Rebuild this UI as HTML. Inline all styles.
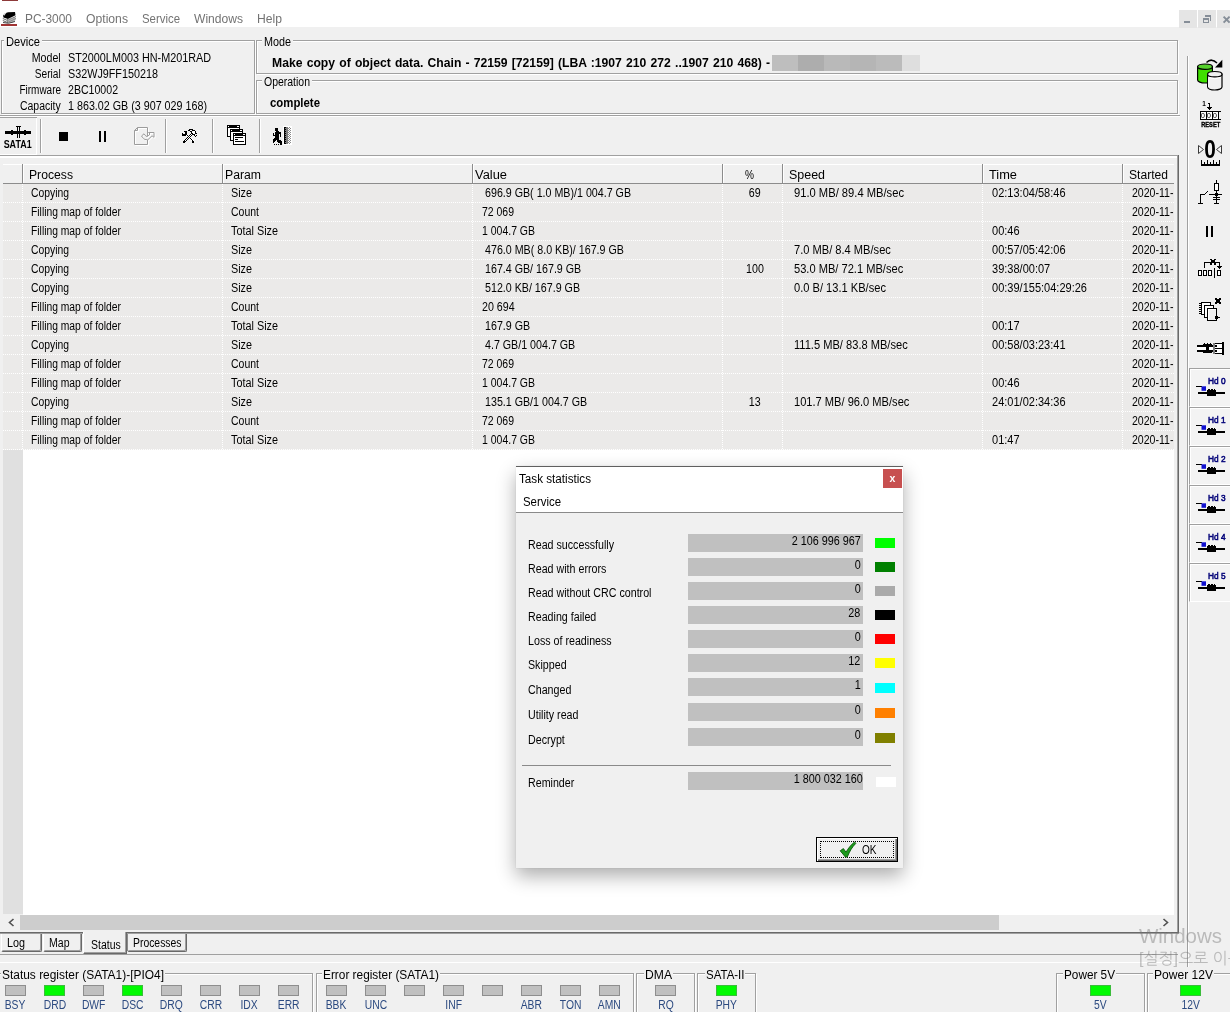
<!DOCTYPE html>
<html lang="en">
<head>
<meta charset="utf-8">
<title>PC-3000</title>
<style>
*{box-sizing:border-box;margin:0;padding:0}
html,body{width:1230px;height:1012px;overflow:hidden;background:#f0f0f0}
body{position:relative;font-family:"Liberation Sans","NanumGothic",sans-serif;font-size:12px;color:#000}
.a{position:absolute}
.t{position:absolute;white-space:pre;line-height:14px;height:14px;transform-origin:0 0}
svg{position:absolute;overflow:visible}
.grp{position:absolute;border:1px solid #a0a0a0;box-shadow:1px 1px 0 #fff,inset 1px 1px 0 #fff}
.cut{position:absolute;background:#f0f0f0;height:3px}
.led{position:absolute;width:21px;height:11px;border:1px solid #8e8e8e;background:#c0c0c0}
.led.on{background:#00fa00;border-color:#3cbc3c}
.nv{color:#1c3a70}
#root{position:absolute;left:0;top:0;width:1230px;height:1012px;will-change:transform}
</style>
</head>
<body>
<div id="root">
<div class="a" style="left:0px;top:0px;width:1230px;height:27px;background:#fff"></div>
<div class="a" style="left:2px;top:0px;width:16px;height:1px;background:#8e3a3a"></div>
<div class="a" style="left:1px;top:24px;width:16px;height:2px;background:#a03434"></div>
<svg style="left:2px;top:12px" width="15" height="12" viewBox="0 0 15 12"><path d="M1 3.500Q3 .5 6 .3L13 0l.5 3.200L6 7 1.500 5.500z" fill="#000"/><path d="M1.500 2.500Q2.500 1 4.500 .8L2 4z" fill="#ddd"/><path d="M.8 6.500l4.700 2 8.500-4M.8 8.500l4.700 2 8.500-4M5.500 7v4" stroke="#666" stroke-width="1" fill="none"/><path d="M5 7.500l4-2 5 .5-1 3-3 2-5-.5z" fill="#9a9a9a" opacity=".7"/><path d="M1 10.500q5 2 12-1" stroke="#444" stroke-width="1" fill="none"/></svg>
<span class="t" style="left:25px;top:12px;color:#737373;transform:scaleX(0.992)">PC-3000</span>
<span class="t" style="left:86px;top:12px;color:#737373;transform:scaleX(1.015)">Options</span>
<span class="t" style="left:142px;top:12px;color:#737373;transform:scaleX(0.950)">Service</span>
<span class="t" style="left:194px;top:12px;color:#737373;transform:scaleX(1.006)">Windows</span>
<span class="t" style="left:257px;top:12px;color:#737373;transform:scaleX(1.013)">Help</span>
<div class="a" style="left:1179px;top:10px;width:18px;height:18px;background:#e5e5e5"></div>
<div class="a" style="left:1198px;top:10px;width:18px;height:18px;background:#e5e5e5"></div>
<div class="a" style="left:1217px;top:10px;width:18px;height:18px;background:#e5e5e5"></div>
<div class="a" style="left:1184px;top:21px;width:6px;height:2px;background:#868e98"></div>
<svg style="left:1198px;top:10px" width="18" height="18" viewBox="0 0 18 18" shape-rendering="crispEdges"><path d="M7 5h6v6h-1V6.500H7z" fill="#868e98"/><path d="M5 8h6v5H5z M6 10v2h4v-2z" fill="#868e98" fill-rule="evenodd"/></svg>
<svg style="left:1217px;top:10px" width="13" height="18" viewBox="0 0 13 18"><path d="M6.600 6.600l6 6M12.600 6.600l-6 6" stroke="#868e98" stroke-width="2" fill="none"/></svg>
<div class="grp" style="left:1px;top:40px;width:254px;height:74px"></div><div class="cut" style="left:4px;top:40px;width:38px"></div><span class="t" style="left:6px;top:35px;transform:scaleX(0.927)">Device</span>
<div class="grp" style="left:256px;top:40px;width:922px;height:34px"></div><div class="cut" style="left:262px;top:40px;width:31px"></div><span class="t" style="left:264px;top:35px;transform:scaleX(0.899)">Mode</span>
<div class="grp" style="left:256px;top:80px;width:922px;height:34px"></div><div class="cut" style="left:262px;top:80px;width:50px"></div><span class="t" style="left:264px;top:75px;transform:scaleX(0.873)">Operation</span>
<span class="t" style="left:28.31px;top:51px;transform:scaleX(0.887);transform-origin:100% 0">Model</span>
<span class="t" style="left:68px;top:51px;transform:scaleX(0.901)">ST2000LM003 HN-M201RAD</span>
<span class="t" style="left:30.31px;top:67px;transform:scaleX(0.847);transform-origin:100% 0">Serial</span>
<span class="t" style="left:68px;top:67px;transform:scaleX(0.899)">S32WJ9FF150218</span>
<span class="t" style="left:11.00px;top:83px;transform:scaleX(0.830);transform-origin:100% 0">Firmware</span>
<span class="t" style="left:68px;top:83px;transform:scaleX(0.882)">2BC10002</span>
<span class="t" style="left:14.31px;top:99px;transform:scaleX(0.872);transform-origin:100% 0">Capacity</span>
<span class="t" style="left:68px;top:99px;transform:scaleX(0.894)">1 863.02 GB (3 907 029 168)</span>
<span class="t" style="left:272px;top:56px;font-weight:bold;transform:scaleX(1.014);word-spacing:0.8px">Make copy of object data. Chain - 72159 [72159] (LBA :1907 210 272 ..1907 210 468) -</span>
<span class="t" style="left:270px;top:96px;font-weight:bold;transform:scaleX(0.949)">complete</span>
<div class="a" style="left:772px;top:55px;width:26px;height:16px;background:#bebebe"></div>
<div class="a" style="left:798px;top:55px;width:26px;height:16px;background:#adadad"></div>
<div class="a" style="left:824px;top:55px;width:26px;height:16px;background:#b9b9b9"></div>
<div class="a" style="left:850px;top:55px;width:26px;height:16px;background:#b5b5b5"></div>
<div class="a" style="left:876px;top:55px;width:26px;height:16px;background:#bbbbbb"></div>
<div class="a" style="left:902px;top:55px;width:18px;height:16px;background:#dedede"></div>
<div class="a" style="left:0px;top:117px;width:37px;height:1px;background:#a0a0a0"></div>
<div class="a" style="left:36px;top:118px;width:1px;height:37px;background:#fff"></div>
<div class="a" style="left:0px;top:154px;width:37px;height:1px;background:#fff"></div>
<svg style="left:0px;top:117px" width="37" height="37" viewBox="0 0 37 37" shape-rendering="crispEdges"><rect x="5" y="14" width="26" height="3"/><rect x="11" y="13" width="2" height="5"/><rect x="24" y="13" width="2" height="5"/><rect x="16" y="9" width="5" height="1"/><rect x="17" y="9" width="1" height="12"/><rect x="19" y="9" width="1" height="12"/></svg>
<span class="t" style="left:2.34px;top:139px;font-size:10px;line-height:12px;height:12px;font-weight:bold;transform:scaleX(0.894);transform-origin:50% 0">SATA1</span>
<div class="a" style="left:40px;top:119px;width:1px;height:34px;background:#a0a0a0"></div>
<div class="a" style="left:41px;top:119px;width:1px;height:34px;background:#fff"></div>
<div class="a" style="left:165px;top:119px;width:1px;height:34px;background:#a0a0a0"></div>
<div class="a" style="left:166px;top:119px;width:1px;height:34px;background:#fff"></div>
<div class="a" style="left:212px;top:119px;width:1px;height:34px;background:#a0a0a0"></div>
<div class="a" style="left:213px;top:119px;width:1px;height:34px;background:#fff"></div>
<div class="a" style="left:259px;top:119px;width:1px;height:34px;background:#a0a0a0"></div>
<div class="a" style="left:260px;top:119px;width:1px;height:34px;background:#fff"></div>
<div class="a" style="left:59px;top:132px;width:9px;height:9px;background:#000"></div>
<div class="a" style="left:99px;top:131px;width:2px;height:11px;background:#000"></div>
<div class="a" style="left:104px;top:131px;width:2px;height:11px;background:#000"></div>
<svg style="left:128px;top:122px" width="32" height="28" viewBox="0 0 32 28"><g fill="none" stroke="#fff" transform="translate(1,1)"><path d="M9.500 5.500H19.500V14M19.500 18V22.500H6.500V8.500L9.500 5.500V8.500H6.500"/><path d="M13.500 14l2.500-2.200 2 2.500h1.800l2.200-2.300-1.500-1.500h5.500v4.800l-2-1.500-4.200 4-2.800-.3-1.500-1z"/></g><g fill="none" stroke="#9c9c9c"><path d="M9.500 5.500H19.500V14M19.500 18V22.500H6.500V8.500L9.500 5.500V8.500H6.500"/><path d="M13.500 14l2.500-2.200 2 2.500h1.800l2.200-2.300-1.500-1.500h5.500v4.800l-2-1.500-4.200 4-2.800-.3-1.500-1z"/></g></svg>
<svg style="left:176px;top:124px" width="28" height="24" viewBox="0 0 28 24" shape-rendering="crispEdges"><path d="M7 8h1v1h-1zM17 7h2v1h-2zM16 8h3v1h-3zM17 9h2v1h-2zM9 10h1v1h-1zM11 10h1v1h-1zM15 10h1v1h-1zM10 11h1v1h-1zM12 11h1v1h-1zM14 11h1v1h-1zM11 12h1v1h-1zM13 12h1v1h-1zM12 13h1v1h-1zM14 13h1v1h-1zM11 14h1v1h-1zM13 14h1v1h-1zM15 14h1v1h-1zM10 15h1v1h-1zM14 15h1v1h-1zM16 15h1v1h-1zM9 16h1v1h-1zM15 16h1v1h-1zM17 16h1v1h-1zM8 17h1v1h-1zM16 17h1v1h-1zM18 17h1v1h-1z" fill="#fff"/><path d="M8 7h3v1h-3zM9 8h2v1h-2zM6 9h1v1h-1zM9 9h2v1h-2zM6 10h5v1h-5zM6 11h4v1h-4zM13 5h4v1h-4zM12 6h2v1h-2zM16 6h3v1h-3zM14 7h2v1h-2zM19 7h1v1h-1zM15 8h1v1h-1zM19 8h1v1h-1zM15 9h2v1h-2zM19 9h2v1h-2zM16 10h3v1h-3zM18 11h1v1h-1zM20 11h1v1h-1zM19 12h1v1h-1zM7 17h2v1h-2zM7 18h2v1h-2zM16 17h2v1h-2zM16 18h2v1h-2zM10 10h1v1h-1zM14 10h1v1h-1zM16 10h1v1h-1zM11 11h1v1h-1zM13 11h1v1h-1zM15 11h1v1h-1zM12 12h1v1h-1zM14 12h1v1h-1zM11 13h1v1h-1zM13 13h1v1h-1zM10 14h1v1h-1zM12 14h1v1h-1zM14 14h1v1h-1zM9 15h1v1h-1zM11 15h1v1h-1zM15 15h1v1h-1zM8 16h1v1h-1zM10 16h1v1h-1zM16 16h1v1h-1zM7 17h1v1h-1zM9 17h1v1h-1zM17 17h1v1h-1z"/></svg>
<svg style="left:227px;top:125px" width="20" height="21" viewBox="0 0 20 21" shape-rendering="crispEdges"><rect x="0" y="0" width="13" height="12"/><rect x="1" y="3" width="11" height="8" fill="#fff"/><rect x="1" y="1" width="1" height="1" fill="#fff"/><rect x="10" y="1" width="2" height="1" fill="#fff"/><rect x="3" y="4" width="13" height="12"/><rect x="4" y="7" width="11" height="8" fill="#fff"/><rect x="4" y="5" width="1" height="1" fill="#fff"/><rect x="13" y="5" width="2" height="1" fill="#fff"/><rect x="6" y="8" width="13" height="12"/><rect x="7" y="11" width="11" height="8" fill="#fff"/><rect x="7" y="9" width="1" height="1" fill="#fff"/><rect x="16" y="9" width="2" height="1" fill="#fff"/><rect x="8" y="12" width="8" height="1"/><rect x="8" y="14" width="3" height="1"/><rect x="8" y="16" width="9" height="1"/></svg>
<svg style="left:268px;top:124px" width="28" height="24" viewBox="0 0 28 24" shape-rendering="crispEdges"><rect x="15" y="2" width="9" height="19" fill="#fff"/><rect x="16" y="3" width="1" height="17"/><rect x="17" y="3" width="3" height="17" fill="#7e7e7e"/><path d="M17 3h1v1h-1zM17 5h1v1h-1zM17 7h1v1h-1zM17 9h1v1h-1zM17 11h1v1h-1zM17 13h1v1h-1zM17 15h1v1h-1zM17 17h1v1h-1zM17 19h1v1h-1z"/><path d="M21 3h1v1h-1zM20 4h1v1h-1zM22 4h1v1h-1zM21 5h1v1h-1zM20 6h1v1h-1zM22 6h1v1h-1zM21 7h1v1h-1zM20 8h1v1h-1zM22 8h1v1h-1zM21 9h1v1h-1zM20 10h1v1h-1zM22 10h1v1h-1zM21 11h1v1h-1zM20 12h1v1h-1zM22 12h1v1h-1zM21 13h1v1h-1zM20 14h1v1h-1zM22 14h1v1h-1zM21 15h1v1h-1zM20 16h1v1h-1zM22 16h1v1h-1zM21 17h1v1h-1zM20 18h1v1h-1zM22 18h1v1h-1zM21 19h1v1h-1z" fill="#8a8a8a"/><path d="M7 4h3v1h-3zM7 5h3v1h-3zM7 6h3v1h-3zM8 7h3v1h-3zM7 8h6v1h-6zM5 9h1v1h-1zM7 9h6v1h-6zM5 10h1v1h-1zM7 10h4v1h-4zM12 10h1v1h-1zM5 11h6v1h-6zM12 11h1v1h-1zM7 12h4v1h-4zM12 12h1v1h-1zM7 13h4v1h-4zM6 14h5v1h-5zM5 15h6v1h-6zM5 16h3v1h-3zM9 16h4v1h-4zM5 17h2v1h-2zM9 17h5v1h-5zM5 18h1v1h-1zM10 18h4v1h-4zM12 19h2v1h-2zM6 20h1v1h-1zM8 20h1v1h-1zM10 20h1v1h-1zM12 20h2v1h-2z"/></svg>
<div class="a" style="left:0px;top:115px;width:1180px;height:1px;background:#a0a0a0"></div>
<div class="a" style="left:0px;top:116px;width:1180px;height:1px;background:#fff"></div>
<div class="a" style="left:0px;top:155px;width:1178px;height:1px;background:#a0a0a0"></div>
<div class="a" style="left:0px;top:156px;width:1177px;height:2px;background:#fff"></div>
<div class="a" style="left:1177px;top:156px;width:1px;height:777px;background:#a0a0a0"></div>
<div class="a" style="left:1178px;top:155px;width:1px;height:779px;background:#696969"></div>
<div class="a" style="left:0px;top:932px;width:1179px;height:1px;background:#696969"></div>
<div class="a" style="left:0px;top:933px;width:1179px;height:1px;background:#a0a0a0"></div>
<div class="a" style="left:3px;top:164px;width:1171px;height:20px;background:#f0f0f0"></div>
<div class="a" style="left:3px;top:164px;width:1171px;height:1px;background:#fff"></div>
<div class="a" style="left:3px;top:183px;width:1171px;height:1px;background:#8c8c8c"></div>
<div class="a" style="left:23px;top:184px;width:1151px;height:731px;background:#fff"></div>
<div class="a" style="left:3px;top:184px;width:1171px;height:266px;background:#ebeae9"></div>
<div class="a" style="left:3px;top:450px;width:20px;height:464px;background:#e0e0e0"></div>
<div class="a" style="left:22px;top:164px;width:1px;height:19px;background:#8c8c8c"></div>
<div class="a" style="left:23px;top:165px;width:1px;height:18px;background:#fff"></div>
<div class="a" style="left:222px;top:164px;width:1px;height:19px;background:#8c8c8c"></div>
<div class="a" style="left:223px;top:165px;width:1px;height:18px;background:#fff"></div>
<div class="a" style="left:472px;top:164px;width:1px;height:19px;background:#8c8c8c"></div>
<div class="a" style="left:473px;top:165px;width:1px;height:18px;background:#fff"></div>
<div class="a" style="left:722px;top:164px;width:1px;height:19px;background:#8c8c8c"></div>
<div class="a" style="left:723px;top:165px;width:1px;height:18px;background:#fff"></div>
<div class="a" style="left:782px;top:164px;width:1px;height:19px;background:#8c8c8c"></div>
<div class="a" style="left:783px;top:165px;width:1px;height:18px;background:#fff"></div>
<div class="a" style="left:982px;top:164px;width:1px;height:19px;background:#8c8c8c"></div>
<div class="a" style="left:983px;top:165px;width:1px;height:18px;background:#fff"></div>
<div class="a" style="left:1122px;top:164px;width:1px;height:19px;background:#8c8c8c"></div>
<div class="a" style="left:1123px;top:165px;width:1px;height:18px;background:#fff"></div>
<div class="a" style="left:3px;top:202px;width:1171px;height:1px;background:repeating-linear-gradient(90deg,#fff 0 1px,transparent 1px 2px)"></div>
<div class="a" style="left:3px;top:221px;width:1171px;height:1px;background:repeating-linear-gradient(90deg,#fff 0 1px,transparent 1px 2px)"></div>
<div class="a" style="left:3px;top:240px;width:1171px;height:1px;background:repeating-linear-gradient(90deg,#fff 0 1px,transparent 1px 2px)"></div>
<div class="a" style="left:3px;top:259px;width:1171px;height:1px;background:repeating-linear-gradient(90deg,#fff 0 1px,transparent 1px 2px)"></div>
<div class="a" style="left:3px;top:278px;width:1171px;height:1px;background:repeating-linear-gradient(90deg,#fff 0 1px,transparent 1px 2px)"></div>
<div class="a" style="left:3px;top:297px;width:1171px;height:1px;background:repeating-linear-gradient(90deg,#fff 0 1px,transparent 1px 2px)"></div>
<div class="a" style="left:3px;top:316px;width:1171px;height:1px;background:repeating-linear-gradient(90deg,#fff 0 1px,transparent 1px 2px)"></div>
<div class="a" style="left:3px;top:335px;width:1171px;height:1px;background:repeating-linear-gradient(90deg,#fff 0 1px,transparent 1px 2px)"></div>
<div class="a" style="left:3px;top:354px;width:1171px;height:1px;background:repeating-linear-gradient(90deg,#fff 0 1px,transparent 1px 2px)"></div>
<div class="a" style="left:3px;top:373px;width:1171px;height:1px;background:repeating-linear-gradient(90deg,#fff 0 1px,transparent 1px 2px)"></div>
<div class="a" style="left:3px;top:392px;width:1171px;height:1px;background:repeating-linear-gradient(90deg,#fff 0 1px,transparent 1px 2px)"></div>
<div class="a" style="left:3px;top:411px;width:1171px;height:1px;background:repeating-linear-gradient(90deg,#fff 0 1px,transparent 1px 2px)"></div>
<div class="a" style="left:3px;top:430px;width:1171px;height:1px;background:repeating-linear-gradient(90deg,#fff 0 1px,transparent 1px 2px)"></div>
<div class="a" style="left:3px;top:449px;width:1171px;height:1px;background:repeating-linear-gradient(90deg,#fff 0 1px,transparent 1px 2px)"></div>
<div class="a" style="left:22px;top:184px;width:1px;height:266px;background:repeating-linear-gradient(180deg,#fff 0 1px,transparent 1px 2px)"></div>
<div class="a" style="left:222px;top:184px;width:1px;height:266px;background:repeating-linear-gradient(180deg,#fff 0 1px,transparent 1px 2px)"></div>
<div class="a" style="left:472px;top:184px;width:1px;height:266px;background:repeating-linear-gradient(180deg,#fff 0 1px,transparent 1px 2px)"></div>
<div class="a" style="left:722px;top:184px;width:1px;height:266px;background:repeating-linear-gradient(180deg,#fff 0 1px,transparent 1px 2px)"></div>
<div class="a" style="left:782px;top:184px;width:1px;height:266px;background:repeating-linear-gradient(180deg,#fff 0 1px,transparent 1px 2px)"></div>
<div class="a" style="left:982px;top:184px;width:1px;height:266px;background:repeating-linear-gradient(180deg,#fff 0 1px,transparent 1px 2px)"></div>
<div class="a" style="left:1122px;top:184px;width:1px;height:266px;background:repeating-linear-gradient(180deg,#fff 0 1px,transparent 1px 2px)"></div>
<span class="t" style="left:29px;top:168px;transform:scaleX(1.015)">Process</span>
<span class="t" style="left:225px;top:168px;transform:scaleX(1.019)">Param</span>
<span class="t" style="left:475px;top:168px;transform:scaleX(1.073)">Value</span>
<span class="t" style="left:745px;top:168px;transform:scaleX(0.843)">%</span>
<span class="t" style="left:789px;top:168px;transform:scaleX(1.037)">Speed</span>
<span class="t" style="left:989px;top:168px;transform:scaleX(1.067)">Time</span>
<span class="t" style="left:1129px;top:168px;transform:scaleX(1.008)">Started</span>
<span class="t" style="left:31px;top:186px;transform:scaleX(0.863)">Copying</span>
<span class="t" style="left:231px;top:186px;transform:scaleX(0.900)">Size</span>
<span class="t" style="left:484.5px;top:186px;transform:scaleX(0.890)">696.9 GB( 1.0 MB)/1 004.7 GB</span>
<span class="t" style="left:748.32px;top:186px;transform:scaleX(0.890);transform-origin:50% 0">69</span>
<span class="t" style="left:794px;top:186px;transform:scaleX(0.932)">91.0 MB/ 89.4 MB/sec</span>
<span class="t" style="left:991.5px;top:186px;transform:scaleX(0.918)">02:13:04/58:46</span>
<span class="t" style="left:1131.5px;top:186px;transform:scaleX(0.880)">2020-11-</span>
<span class="t" style="left:31px;top:205px;transform:scaleX(0.859)">Filling map of folder</span>
<span class="t" style="left:231px;top:205px;transform:scaleX(0.874)">Count</span>
<span class="t" style="left:481.5px;top:205px;transform:scaleX(0.872)">72 069</span>
<span class="t" style="left:1131.5px;top:205px;transform:scaleX(0.880)">2020-11-</span>
<span class="t" style="left:31px;top:224px;transform:scaleX(0.859)">Filling map of folder</span>
<span class="t" style="left:231px;top:224px;transform:scaleX(0.903)">Total Size</span>
<span class="t" style="left:481.5px;top:224px;transform:scaleX(0.873)">1 004.7 GB</span>
<span class="t" style="left:991.5px;top:224px;transform:scaleX(0.918)">00:46</span>
<span class="t" style="left:1131.5px;top:224px;transform:scaleX(0.880)">2020-11-</span>
<span class="t" style="left:31px;top:243px;transform:scaleX(0.863)">Copying</span>
<span class="t" style="left:231px;top:243px;transform:scaleX(0.900)">Size</span>
<span class="t" style="left:484.5px;top:243px;transform:scaleX(0.890)">476.0 MB( 8.0 KB)/ 167.9 GB</span>
<span class="t" style="left:794px;top:243px;transform:scaleX(0.925)">7.0 MB/ 8.4 MB/sec</span>
<span class="t" style="left:991.5px;top:243px;transform:scaleX(0.918)">00:57/05:42:06</span>
<span class="t" style="left:1131.5px;top:243px;transform:scaleX(0.880)">2020-11-</span>
<span class="t" style="left:31px;top:262px;transform:scaleX(0.863)">Copying</span>
<span class="t" style="left:231px;top:262px;transform:scaleX(0.900)">Size</span>
<span class="t" style="left:484.5px;top:262px;transform:scaleX(0.890)">167.4 GB/ 167.9 GB</span>
<span class="t" style="left:744.98px;top:262px;transform:scaleX(0.890);transform-origin:50% 0">100</span>
<span class="t" style="left:794px;top:262px;transform:scaleX(0.925)">53.0 MB/ 72.1 MB/sec</span>
<span class="t" style="left:991.5px;top:262px;transform:scaleX(0.918)">39:38/00:07</span>
<span class="t" style="left:1131.5px;top:262px;transform:scaleX(0.880)">2020-11-</span>
<span class="t" style="left:31px;top:281px;transform:scaleX(0.863)">Copying</span>
<span class="t" style="left:231px;top:281px;transform:scaleX(0.900)">Size</span>
<span class="t" style="left:484.5px;top:281px;transform:scaleX(0.890)">512.0 KB/ 167.9 GB</span>
<span class="t" style="left:794px;top:281px;transform:scaleX(0.925)">0.0 B/ 13.1 KB/sec</span>
<span class="t" style="left:991.5px;top:281px;transform:scaleX(0.918)">00:39/155:04:29:26</span>
<span class="t" style="left:1131.5px;top:281px;transform:scaleX(0.880)">2020-11-</span>
<span class="t" style="left:31px;top:300px;transform:scaleX(0.859)">Filling map of folder</span>
<span class="t" style="left:231px;top:300px;transform:scaleX(0.874)">Count</span>
<span class="t" style="left:481.5px;top:300px;transform:scaleX(0.890)">20 694</span>
<span class="t" style="left:1131.5px;top:300px;transform:scaleX(0.880)">2020-11-</span>
<span class="t" style="left:31px;top:319px;transform:scaleX(0.859)">Filling map of folder</span>
<span class="t" style="left:231px;top:319px;transform:scaleX(0.903)">Total Size</span>
<span class="t" style="left:484.5px;top:319px;transform:scaleX(0.890)">167.9 GB</span>
<span class="t" style="left:991.5px;top:319px;transform:scaleX(0.918)">00:17</span>
<span class="t" style="left:1131.5px;top:319px;transform:scaleX(0.880)">2020-11-</span>
<span class="t" style="left:31px;top:338px;transform:scaleX(0.863)">Copying</span>
<span class="t" style="left:231px;top:338px;transform:scaleX(0.900)">Size</span>
<span class="t" style="left:484.5px;top:338px;transform:scaleX(0.890)">4.7 GB/1 004.7 GB</span>
<span class="t" style="left:794px;top:338px;transform:scaleX(0.925)">111.5 MB/ 83.8 MB/sec</span>
<span class="t" style="left:991.5px;top:338px;transform:scaleX(0.918)">00:58/03:23:41</span>
<span class="t" style="left:1131.5px;top:338px;transform:scaleX(0.880)">2020-11-</span>
<span class="t" style="left:31px;top:357px;transform:scaleX(0.859)">Filling map of folder</span>
<span class="t" style="left:231px;top:357px;transform:scaleX(0.874)">Count</span>
<span class="t" style="left:481.5px;top:357px;transform:scaleX(0.872)">72 069</span>
<span class="t" style="left:1131.5px;top:357px;transform:scaleX(0.880)">2020-11-</span>
<span class="t" style="left:31px;top:376px;transform:scaleX(0.859)">Filling map of folder</span>
<span class="t" style="left:231px;top:376px;transform:scaleX(0.903)">Total Size</span>
<span class="t" style="left:481.5px;top:376px;transform:scaleX(0.873)">1 004.7 GB</span>
<span class="t" style="left:991.5px;top:376px;transform:scaleX(0.918)">00:46</span>
<span class="t" style="left:1131.5px;top:376px;transform:scaleX(0.880)">2020-11-</span>
<span class="t" style="left:31px;top:395px;transform:scaleX(0.863)">Copying</span>
<span class="t" style="left:231px;top:395px;transform:scaleX(0.900)">Size</span>
<span class="t" style="left:484.5px;top:395px;transform:scaleX(0.890)">135.1 GB/1 004.7 GB</span>
<span class="t" style="left:748.32px;top:395px;transform:scaleX(0.890);transform-origin:50% 0">13</span>
<span class="t" style="left:794px;top:395px;transform:scaleX(0.925)">101.7 MB/ 96.0 MB/sec</span>
<span class="t" style="left:991.5px;top:395px;transform:scaleX(0.918)">24:01/02:34:36</span>
<span class="t" style="left:1131.5px;top:395px;transform:scaleX(0.880)">2020-11-</span>
<span class="t" style="left:31px;top:414px;transform:scaleX(0.859)">Filling map of folder</span>
<span class="t" style="left:231px;top:414px;transform:scaleX(0.874)">Count</span>
<span class="t" style="left:481.5px;top:414px;transform:scaleX(0.872)">72 069</span>
<span class="t" style="left:1131.5px;top:414px;transform:scaleX(0.880)">2020-11-</span>
<span class="t" style="left:31px;top:433px;transform:scaleX(0.859)">Filling map of folder</span>
<span class="t" style="left:231px;top:433px;transform:scaleX(0.903)">Total Size</span>
<span class="t" style="left:481.5px;top:433px;transform:scaleX(0.873)">1 004.7 GB</span>
<span class="t" style="left:991.5px;top:433px;transform:scaleX(0.918)">01:47</span>
<span class="t" style="left:1131.5px;top:433px;transform:scaleX(0.880)">2020-11-</span>
<div class="a" style="left:3px;top:915px;width:1171px;height:15px;background:#f0f0f0"></div>
<div class="a" style="left:20px;top:915px;width:979px;height:15px;background:#cdcdcd"></div>
<svg style="left:3px;top:915px" width="17" height="15" viewBox="0 0 17 15"><path d="M10.5 4L6.5 7.5l4 3.5" stroke="#505050" stroke-width="1.6" fill="none"/></svg>
<svg style="left:1157px;top:915px" width="17" height="15" viewBox="0 0 17 15"><path d="M6.5 4l4 3.5-4 3.5" stroke="#505050" stroke-width="1.6" fill="none"/></svg>
<div class="a" style="left:1px;top:934px;width:41px;height:18px;background:#f0f0f0;border-right:1px solid #696969;border-bottom:1px solid #696969;border-left:1px solid #fff;border-radius:0 0 2px 2px;box-shadow:inset -1px -1px 0 #a0a0a0"></div><span class="t" style="left:6.5px;top:936px;transform:scaleX(0.899)">Log</span>
<div class="a" style="left:43px;top:934px;width:39px;height:18px;background:#f0f0f0;border-right:1px solid #696969;border-bottom:1px solid #696969;border-left:1px solid #fff;border-radius:0 0 2px 2px;box-shadow:inset -1px -1px 0 #a0a0a0"></div><span class="t" style="left:48.5px;top:936px;transform:scaleX(0.878)">Map</span>
<div class="a" style="left:127px;top:934px;width:60px;height:18px;background:#f0f0f0;border-right:1px solid #696969;border-bottom:1px solid #696969;border-left:1px solid #fff;border-radius:0 0 2px 2px;box-shadow:inset -1px -1px 0 #a0a0a0"></div><span class="t" style="left:132.5px;top:936px;transform:scaleX(0.866)">Processes</span>
<div class="a" style="left:127px;top:934px;width:1px;height:17px;background:#8a8a8a"></div>
<div class="a" style="left:83px;top:932px;width:44px;height:22px;background:#f0f0f0;border-right:1px solid #696969;border-bottom:1px solid #696969;border-left:1px solid #fff;box-shadow:inset -1px -1px 0 #a0a0a0"></div><span class="t" style="left:90.5px;top:938px;transform:scaleX(0.873)">Status</span>
<div class="a" style="left:0px;top:954px;width:1178px;height:1px;background:#a0a0a0"></div>
<div class="a" style="left:0px;top:962px;width:1188px;height:1px;background:#fff"></div>
<div class="grp" style="left:-2px;top:973px;width:315px;height:50px"></div><div class="cut" style="left:1px;top:973px;width:164px"></div><span class="t" style="left:2px;top:968px;transform:scaleX(0.994)">Status register (SATA1)-[PIO4]</span>
<div class="grp" style="left:316px;top:973px;width:318px;height:50px"></div><div class="cut" style="left:322px;top:973px;width:118px"></div><span class="t" style="left:323px;top:968px;transform:scaleX(0.987)">Error register (SATA1)</span>
<div class="grp" style="left:636px;top:973px;width:59px;height:50px"></div><div class="cut" style="left:643.5px;top:973px;width:29px"></div><span class="t" style="left:644.5px;top:968px;transform:scaleX(1.012)">DMA</span>
<div class="grp" style="left:697px;top:973px;width:59px;height:50px"></div><div class="cut" style="left:704.5px;top:973px;width:40.5px"></div><span class="t" style="left:705.5px;top:968px;transform:scaleX(0.957)">SATA-II</span>
<div class="grp" style="left:1056px;top:973px;width:89px;height:50px"></div><div class="cut" style="left:1063px;top:973px;width:53px"></div><span class="t" style="left:1064px;top:968px;transform:scaleX(0.980)">Power 5V</span>
<div class="grp" style="left:1147px;top:973px;width:100px;height:50px"></div><div class="cut" style="left:1153px;top:973px;width:61px"></div><span class="t" style="left:1154px;top:968px;transform:scaleX(1.005)">Power 12V</span>
<div class="led" style="left:5px;top:985px"></div><span class="t" style="left:3.49px;top:998px;color:#2c4a80;transform:scaleX(0.860);transform-origin:50% 0">BSY</span>
<div class="led on" style="left:44px;top:985px"></div><span class="t" style="left:41.50px;top:998px;color:#2c4a80;transform:scaleX(0.860);transform-origin:50% 0">DRD</span>
<div class="led" style="left:83px;top:985px"></div><span class="t" style="left:79.84px;top:998px;color:#2c4a80;transform:scaleX(0.860);transform-origin:50% 0">DWF</span>
<div class="led on" style="left:122px;top:985px"></div><span class="t" style="left:119.83px;top:998px;color:#2c4a80;transform:scaleX(0.860);transform-origin:50% 0">DSC</span>
<div class="led" style="left:161px;top:985px"></div><span class="t" style="left:158.16px;top:998px;color:#2c4a80;transform:scaleX(0.860);transform-origin:50% 0">DRQ</span>
<div class="led" style="left:200px;top:985px"></div><span class="t" style="left:197.50px;top:998px;color:#2c4a80;transform:scaleX(0.860);transform-origin:50% 0">CRR</span>
<div class="led" style="left:239px;top:985px"></div><span class="t" style="left:239.49px;top:998px;color:#2c4a80;transform:scaleX(0.860);transform-origin:50% 0">IDX</span>
<div class="led" style="left:278px;top:985px"></div><span class="t" style="left:275.83px;top:998px;color:#2c4a80;transform:scaleX(0.860);transform-origin:50% 0">ERR</span>
<div class="led" style="left:326px;top:985px"></div><span class="t" style="left:324.49px;top:998px;color:#2c4a80;transform:scaleX(0.860);transform-origin:50% 0">BBK</span>
<div class="led" style="left:365px;top:985px"></div><span class="t" style="left:362.50px;top:998px;color:#2c4a80;transform:scaleX(0.860);transform-origin:50% 0">UNC</span>
<div class="led" style="left:404px;top:985px"></div>
<div class="led" style="left:443px;top:985px"></div><span class="t" style="left:443.83px;top:998px;color:#2c4a80;transform:scaleX(0.860);transform-origin:50% 0">INF</span>
<div class="led" style="left:482px;top:985px"></div>
<div class="led" style="left:521px;top:985px"></div><span class="t" style="left:519.16px;top:998px;color:#2c4a80;transform:scaleX(0.860);transform-origin:50% 0">ABR</span>
<div class="led" style="left:560px;top:985px"></div><span class="t" style="left:557.94px;top:998px;color:#2c4a80;transform:scaleX(0.860);transform-origin:50% 0">TON</span>
<div class="led" style="left:599px;top:985px"></div><span class="t" style="left:596.16px;top:998px;color:#2c4a80;transform:scaleX(0.860);transform-origin:50% 0">AMN</span>
<div class="led" style="left:655px;top:985px"></div><span class="t" style="left:656.50px;top:998px;color:#2c4a80;transform:scaleX(0.860);transform-origin:50% 0">RQ</span>
<div class="led on" style="left:716px;top:985px"></div><span class="t" style="left:714.16px;top:998px;color:#2c4a80;transform:scaleX(0.860);transform-origin:50% 0">PHY</span>
<div class="led on" style="left:1090px;top:985px"></div><span class="t" style="left:1093.16px;top:998px;color:#2c4a80;transform:scaleX(0.860);transform-origin:50% 0">5V</span>
<div class="led on" style="left:1180px;top:985px"></div><span class="t" style="left:1179.82px;top:998px;color:#2c4a80;transform:scaleX(0.860);transform-origin:50% 0">12V</span>
<div class="a" style="left:1187px;top:56px;width:1px;height:911px;background:#a0a0a0"></div>
<div class="a" style="left:1188px;top:56px;width:1px;height:911px;background:#fff"></div>
<svg style="left:1192px;top:56px" width="36" height="38" viewBox="0 0 36 38"><g stroke="#000" stroke-width="1.200"><path d="M5.600 10.500v13.500a7.400 3 0 0 0 14.800 0V10.500z" fill="#3fdf00"/><ellipse cx="13" cy="10.700" rx="7.400" ry="2.700" fill="#55d02c"/><path d="M15.600 18v13a7.200 3 0 0 0 14.400 0V18z" fill="#f0f0f0"/><ellipse cx="22.800" cy="18.200" rx="7.200" ry="2.700" fill="#f0f0f0"/><path d="M14.500 6.500q5-5 10.500.5" fill="none" stroke-width="1.500"/></g><path d="M16.700 21.500q6 2.600 12.200 0M16.700 21.500v9.500" stroke="#fff" stroke-width="1" fill="none"/><path d="M30.300 3.800V11.500H23z" fill="#000"/></svg>
<svg style="left:1192px;top:96px" width="36" height="26" viewBox="0 0 36 26" shape-rendering="crispEdges"><rect x="9" y="16" width="17" height="7" fill="#fff"/><path d="M16 7h2v1h-2zM17 8h1v1h-1zM17 9h1v1h-1zM17 10h1v1h-1zM15 11h5v1h-5zM16 12h3v1h-3zM17 13h1v1h-1zM8 15h21v1h-21zM8 23h21v1h-21zM8 16h1v1h-1zM14 16h1v1h-1zM20 16h1v1h-1zM26 16h1v1h-1zM8 17h1v1h-1zM14 17h1v1h-1zM20 17h1v1h-1zM26 17h1v1h-1zM8 18h1v1h-1zM14 18h1v1h-1zM20 18h1v1h-1zM26 18h1v1h-1zM8 19h1v1h-1zM14 19h1v1h-1zM20 19h1v1h-1zM26 19h1v1h-1zM8 20h1v1h-1zM14 20h1v1h-1zM20 20h1v1h-1zM26 20h1v1h-1zM8 21h1v1h-1zM14 21h1v1h-1zM20 21h1v1h-1zM26 21h1v1h-1zM8 22h1v1h-1zM14 22h1v1h-1zM20 22h1v1h-1zM26 22h1v1h-1z"/></svg>
<span class="t" style="left:1198.83px;top:120px;font-size:7px;line-height:9px;height:9px;font-weight:bold;transform:scaleX(0.814);transform-origin:50% 0;-webkit-text-stroke:.35px #000">RESET</span>
<span class="t" style="left:1201.65px;top:98.5px;font-size:7px;line-height:9px;height:9px;font-weight:bold;transform:scaleX(0.922);transform-origin:50% 0">1</span>
<span class="t" style="left:1201.05px;top:110.5px;font-size:7px;line-height:9px;height:9px;transform:scaleX(1.075);transform-origin:50% 0">0</span>
<span class="t" style="left:1207.05px;top:110.5px;font-size:7px;line-height:9px;height:9px;transform:scaleX(1.075);transform-origin:50% 0">0</span>
<span class="t" style="left:1213.05px;top:110.5px;font-size:7px;line-height:9px;height:9px;transform:scaleX(1.075);transform-origin:50% 0">0</span>
<svg style="left:1192px;top:134px" width="36" height="36" viewBox="0 0 36 36"><path d="M6.500 11.500v8l5-4z M29.500 11.500v8l-5-4z" fill="#f6f6f6" stroke="#3a3a3a" stroke-width="1"/></svg>
<span class="t" style="left:1203.05px;top:136px;font-size:25px;line-height:26px;height:26px;font-weight:bold;transform:scaleX(0.834);transform-origin:50% 0">0</span>
<svg style="left:1192px;top:134px" width="36" height="36" viewBox="0 0 36 36" shape-rendering="crispEdges"><path d="M9 30h19v1h-19zM9 31h19v1h-19zM9 26h1v1h-1zM9 27h1v1h-1zM9 28h1v1h-1zM9 29h1v1h-1zM15 26h1v1h-1zM15 27h1v1h-1zM15 28h1v1h-1zM15 29h1v1h-1zM21 26h1v1h-1zM21 27h1v1h-1zM21 28h1v1h-1zM21 29h1v1h-1zM27 26h1v1h-1zM27 27h1v1h-1zM27 28h1v1h-1zM27 29h1v1h-1zM12 28h1v1h-1zM12 29h1v1h-1zM18 28h1v1h-1zM18 29h1v1h-1zM24 28h1v1h-1zM24 29h1v1h-1z"/></svg>
<svg style="left:1192px;top:172px" width="36" height="36" viewBox="0 0 36 36" shape-rendering="crispEdges"><rect x="23" y="12" width="3" height="6" fill="#fff"/><path d="M24 8h1v1h-1zM24 9h1v1h-1zM24 10h1v1h-1zM22 11h5v1h-5zM22 18h5v1h-5zM24 19h1v1h-1zM24 20h1v1h-1zM17 22h13v1h-13zM23 21h3v1h-3zM23 23h3v1h-3zM24 24h1v1h-1zM21 25h7v1h-7zM24 26h1v1h-1zM21 27h7v1h-7zM24 28h1v1h-1zM24 29h1v1h-1zM24 30h1v1h-1zM22 31h5v1h-5zM6 31h5v1h-5zM8 22h5v1h-5zM13 21h1v1h-1zM14 20h1v1h-1zM15 19h1v1h-1zM22 12h1v1h-1zM26 12h1v1h-1zM22 13h1v1h-1zM26 13h1v1h-1zM22 14h1v1h-1zM26 14h1v1h-1zM22 15h1v1h-1zM26 15h1v1h-1zM22 16h1v1h-1zM26 16h1v1h-1zM22 17h1v1h-1zM26 17h1v1h-1zM8 23h1v1h-1zM8 24h1v1h-1zM8 25h1v1h-1zM8 26h1v1h-1zM8 27h1v1h-1zM8 28h1v1h-1zM8 29h1v1h-1zM8 30h1v1h-1z"/></svg>
<div class="a" style="left:1206px;top:226px;width:2px;height:11px;background:#000"></div>
<div class="a" style="left:1211px;top:226px;width:2px;height:11px;background:#000"></div>
<svg style="left:1192px;top:250px" width="36" height="32" viewBox="0 0 36 32" shape-rendering="crispEdges"><rect x="7" y="21" width="2" height="4" fill="#fff"/><rect x="12" y="21" width="2" height="4" fill="#fff"/><rect x="17" y="21" width="2" height="4" fill="#fff"/><rect x="26" y="21" width="2" height="4" fill="#fff"/><path d="M6 20h4v1h-4zM6 25h4v1h-4zM6 21h1v1h-1zM9 21h1v1h-1zM6 22h1v1h-1zM9 22h1v1h-1zM6 23h1v1h-1zM9 23h1v1h-1zM6 24h1v1h-1zM9 24h1v1h-1zM11 20h4v1h-4zM11 25h4v1h-4zM11 21h1v1h-1zM14 21h1v1h-1zM11 22h1v1h-1zM14 22h1v1h-1zM11 23h1v1h-1zM14 23h1v1h-1zM11 24h1v1h-1zM14 24h1v1h-1zM16 20h4v1h-4zM16 25h4v1h-4zM16 21h1v1h-1zM19 21h1v1h-1zM16 22h1v1h-1zM19 22h1v1h-1zM16 23h1v1h-1zM19 23h1v1h-1zM16 24h1v1h-1zM19 24h1v1h-1zM25 20h4v1h-4zM25 25h4v1h-4zM25 21h1v1h-1zM28 21h1v1h-1zM25 22h1v1h-1zM28 22h1v1h-1zM25 23h1v1h-1zM28 23h1v1h-1zM25 24h1v1h-1zM28 24h1v1h-1zM22 18h1v1h-1zM22 19h1v1h-1zM22 20h1v1h-1zM22 21h1v1h-1zM22 22h1v1h-1zM22 23h1v1h-1zM22 24h1v1h-1zM22 25h1v1h-1zM22 26h1v1h-1zM22 27h1v1h-1zM12 12h1v1h-1zM12 13h1v1h-1zM12 14h1v1h-1zM12 15h1v1h-1zM12 16h1v1h-1zM12 17h1v1h-1zM12 12h16v1h-16zM27 13h1v1h-1zM27 14h1v1h-1zM27 15h1v1h-1zM25 16h5v1h-5zM26 17h3v1h-3zM27 18h1v1h-1zM18 9h2v1h-2zM22 9h2v1h-2zM19 10h4v1h-4zM19 11h4v1h-4zM19 12h4v1h-4zM18 13h2v1h-2zM22 13h2v1h-2zM18 14h2v1h-2zM22 14h2v1h-2zM20 11h2v1h-2z"/></svg>
<svg style="left:1192px;top:290px" width="36" height="36" viewBox="0 0 36 36" shape-rendering="crispEdges"><rect x="9" y="12" width="10" height="13"/><rect x="10" y="13" width="8" height="11" fill="#fff"/><rect x="12" y="15" width="10" height="13"/><rect x="13" y="16" width="8" height="11" fill="#fff"/><rect x="15" y="18" width="10" height="13"/><rect x="16" y="19" width="8" height="11" fill="#fff"/><rect x="17" y="20" width="7" height="10" fill="#f0f0f0"/><path d="M7 13h2v1h-2zM7 15h2v1h-2zM7 17h2v1h-2zM7 19h2v1h-2zM7 21h2v1h-2zM7 23h2v1h-2zM23 26h3v1h-3zM23 27h5v1h-5zM23 28h3v1h-3zM23 8h2v1h-2zM27 8h2v1h-2zM23 9h6v1h-6zM24 10h4v1h-4zM24 11h4v1h-4zM23 12h6v1h-6zM23 13h2v1h-2zM27 13h2v1h-2z"/></svg>
<svg style="left:1192px;top:330px" width="36" height="30" viewBox="0 0 36 30" shape-rendering="crispEdges"><rect x="5" y="17" width="16" height="3" fill="#fff"/><rect x="23" y="14" width="7" height="9" fill="#fff"/><rect x="5" y="15" width="20" height="2"/><rect x="5" y="20" width="20" height="2"/><rect x="14" y="14" width="3" height="9"/><rect x="11" y="14" width="9" height="1"/><rect x="11" y="22" width="9" height="1"/><path d="M12 13h1v1h-1zM15 13h1v1h-1zM18 13h1v1h-1z"/><rect x="21" y="13" width="2" height="11" fill="#808080"/><rect x="23" y="13" width="8" height="1"/><rect x="23" y="18" width="8" height="1"/><rect x="23" y="23" width="8" height="1"/><rect x="30" y="12" width="2" height="13"/><rect x="23" y="15" width="2" height="2"/><rect x="23" y="20" width="2" height="2"/></svg>
<div class="a" style="left:1189px;top:368px;width:41px;height:39px;background:#f3f3f3;border-top:1px solid #a0a0a0;border-left:1px solid #a0a0a0;border-bottom:1px solid #fff;box-shadow:inset 1px 1px 0 #fff"></div>
<span class="t" style="left:1207.5px;top:375px;font-size:9.5px;line-height:12px;height:12px;color:#000078;transform:scaleX(0.872);-webkit-text-stroke:.55px #000078">Hd 0</span>
<svg style="left:1195px;top:385px" width="32" height="12" viewBox="0 0 32 12"><rect x="1" y="1" width="6" height="1"/><rect x="6.500" y="1.300" width="4.500" height="4.500" fill="#1010d0"/><rect x="3" y="7" width="27" height="2"/><rect x="12" y="5" width="9" height="6"/><path d="M13 4h2v1h-2zM16 4h2v1h-2zM19 4h1v1h-1z"/></svg>
<div class="a" style="left:1189px;top:407px;width:41px;height:39px;background:#f3f3f3;border-top:1px solid #a0a0a0;border-left:1px solid #a0a0a0;border-bottom:1px solid #fff;box-shadow:inset 1px 1px 0 #fff"></div>
<span class="t" style="left:1207.5px;top:414px;font-size:9.5px;line-height:12px;height:12px;color:#000078;transform:scaleX(0.872);-webkit-text-stroke:.55px #000078">Hd 1</span>
<svg style="left:1195px;top:424px" width="32" height="12" viewBox="0 0 32 12"><rect x="1" y="1" width="6" height="1"/><rect x="6.500" y="1.300" width="4.500" height="4.500" fill="#1010d0"/><rect x="3" y="7" width="27" height="2"/><rect x="12" y="5" width="9" height="6"/><path d="M13 4h2v1h-2zM16 4h2v1h-2zM19 4h1v1h-1z"/></svg>
<div class="a" style="left:1189px;top:446px;width:41px;height:39px;background:#f3f3f3;border-top:1px solid #a0a0a0;border-left:1px solid #a0a0a0;border-bottom:1px solid #fff;box-shadow:inset 1px 1px 0 #fff"></div>
<span class="t" style="left:1207.5px;top:453px;font-size:9.5px;line-height:12px;height:12px;color:#000078;transform:scaleX(0.872);-webkit-text-stroke:.55px #000078">Hd 2</span>
<svg style="left:1195px;top:463px" width="32" height="12" viewBox="0 0 32 12"><rect x="1" y="1" width="6" height="1"/><rect x="6.500" y="1.300" width="4.500" height="4.500" fill="#1010d0"/><rect x="3" y="7" width="27" height="2"/><rect x="12" y="5" width="9" height="6"/><path d="M13 4h2v1h-2zM16 4h2v1h-2zM19 4h1v1h-1z"/></svg>
<div class="a" style="left:1189px;top:485px;width:41px;height:39px;background:#f3f3f3;border-top:1px solid #a0a0a0;border-left:1px solid #a0a0a0;border-bottom:1px solid #fff;box-shadow:inset 1px 1px 0 #fff"></div>
<span class="t" style="left:1207.5px;top:492px;font-size:9.5px;line-height:12px;height:12px;color:#000078;transform:scaleX(0.872);-webkit-text-stroke:.55px #000078">Hd 3</span>
<svg style="left:1195px;top:502px" width="32" height="12" viewBox="0 0 32 12"><rect x="1" y="1" width="6" height="1"/><rect x="6.500" y="1.300" width="4.500" height="4.500" fill="#1010d0"/><rect x="3" y="7" width="27" height="2"/><rect x="12" y="5" width="9" height="6"/><path d="M13 4h2v1h-2zM16 4h2v1h-2zM19 4h1v1h-1z"/></svg>
<div class="a" style="left:1189px;top:524px;width:41px;height:39px;background:#f3f3f3;border-top:1px solid #a0a0a0;border-left:1px solid #a0a0a0;border-bottom:1px solid #fff;box-shadow:inset 1px 1px 0 #fff"></div>
<span class="t" style="left:1207.5px;top:531px;font-size:9.5px;line-height:12px;height:12px;color:#000078;transform:scaleX(0.872);-webkit-text-stroke:.55px #000078">Hd 4</span>
<svg style="left:1195px;top:541px" width="32" height="12" viewBox="0 0 32 12"><rect x="1" y="1" width="6" height="1"/><rect x="6.500" y="1.300" width="4.500" height="4.500" fill="#1010d0"/><rect x="3" y="7" width="27" height="2"/><rect x="12" y="5" width="9" height="6"/><path d="M13 4h2v1h-2zM16 4h2v1h-2zM19 4h1v1h-1z"/></svg>
<div class="a" style="left:1189px;top:563px;width:41px;height:39px;background:#f3f3f3;border-top:1px solid #a0a0a0;border-left:1px solid #a0a0a0;border-bottom:1px solid #fff;box-shadow:inset 1px 1px 0 #fff"></div>
<span class="t" style="left:1207.5px;top:570px;font-size:9.5px;line-height:12px;height:12px;color:#000078;transform:scaleX(0.872);-webkit-text-stroke:.55px #000078">Hd 5</span>
<svg style="left:1195px;top:580px" width="32" height="12" viewBox="0 0 32 12"><rect x="1" y="1" width="6" height="1"/><rect x="6.500" y="1.300" width="4.500" height="4.500" fill="#1010d0"/><rect x="3" y="7" width="27" height="2"/><rect x="12" y="5" width="9" height="6"/><path d="M13 4h2v1h-2zM16 4h2v1h-2zM19 4h1v1h-1z"/></svg>
<div class="a" style="left:516px;top:466px;width:387px;height:402px;background:#f0f0f0;box-shadow:0 8px 18px 0 rgba(0,0,0,.32),0 0 1px rgba(0,0,0,.12)"></div>
<div class="a" style="left:516px;top:466px;width:387px;height:1px;background:#606060"></div>
<div class="a" style="left:516px;top:467px;width:387px;height:46px;background:#fff"></div>
<div class="a" style="left:516px;top:512px;width:387px;height:1px;background:#8a8a8a"></div>
<span class="t" style="left:519px;top:472px;transform:scaleX(0.973)">Task statistics</span>
<span class="t" style="left:523px;top:495px;transform:scaleX(0.950)">Service</span>
<div class="a" style="left:883px;top:469px;width:19px;height:19px;background:#c75050"></div>
<span class="t" style="left:889.58px;top:472px;font-size:10.5px;line-height:12px;height:12px;font-weight:bold;color:#fff">x</span>
<div class="a" style="left:688px;top:534px;width:175px;height:18px;background:#c0c0c0"></div>
<span class="t" style="left:527.5px;top:538px;transform:scaleX(0.890)">Read successfully</span>
<span class="t" style="left:783.75px;top:534px;transform:scaleX(0.900);transform-origin:100% 0">2 106 996 967</span>
<div class="a" style="left:875px;top:538px;width:20px;height:10px;background:#00ff00"></div>
<div class="a" style="left:688px;top:558px;width:175px;height:18px;background:#c0c0c0"></div>
<span class="t" style="left:527.5px;top:562px;transform:scaleX(0.890)">Read with errors</span>
<span class="t" style="left:853.81px;top:558px;transform:scaleX(0.900);transform-origin:100% 0">0</span>
<div class="a" style="left:875px;top:562px;width:20px;height:10px;background:#008000"></div>
<div class="a" style="left:688px;top:582px;width:175px;height:18px;background:#c0c0c0"></div>
<span class="t" style="left:527.5px;top:586px;transform:scaleX(0.890)">Read without CRC control</span>
<span class="t" style="left:853.81px;top:582px;transform:scaleX(0.900);transform-origin:100% 0">0</span>
<div class="a" style="left:875px;top:586px;width:20px;height:10px;background:#aaaaaa"></div>
<div class="a" style="left:688px;top:606px;width:175px;height:18px;background:#c0c0c0"></div>
<span class="t" style="left:527.5px;top:610px;transform:scaleX(0.890)">Reading failed</span>
<span class="t" style="left:847.14px;top:606px;transform:scaleX(0.900);transform-origin:100% 0">28</span>
<div class="a" style="left:875px;top:610px;width:20px;height:10px;background:#000000"></div>
<div class="a" style="left:688px;top:630px;width:175px;height:18px;background:#c0c0c0"></div>
<span class="t" style="left:527.5px;top:634px;transform:scaleX(0.890)">Loss of readiness</span>
<span class="t" style="left:853.81px;top:630px;transform:scaleX(0.900);transform-origin:100% 0">0</span>
<div class="a" style="left:875px;top:634px;width:20px;height:10px;background:#ff0000"></div>
<div class="a" style="left:688px;top:654px;width:175px;height:18px;background:#c0c0c0"></div>
<span class="t" style="left:527.5px;top:658px;transform:scaleX(0.890)">Skipped</span>
<span class="t" style="left:847.14px;top:654px;transform:scaleX(0.900);transform-origin:100% 0">12</span>
<div class="a" style="left:875px;top:658px;width:20px;height:10px;background:#ffff00"></div>
<div class="a" style="left:688px;top:678px;width:175px;height:18px;background:#c0c0c0"></div>
<span class="t" style="left:527.5px;top:683px;transform:scaleX(0.890)">Changed</span>
<span class="t" style="left:853.81px;top:678px;transform:scaleX(0.900);transform-origin:100% 0">1</span>
<div class="a" style="left:875px;top:683px;width:20px;height:10px;background:#00ffff"></div>
<div class="a" style="left:688px;top:703px;width:175px;height:18px;background:#c0c0c0"></div>
<span class="t" style="left:527.5px;top:708px;transform:scaleX(0.890)">Utility read</span>
<span class="t" style="left:853.81px;top:703px;transform:scaleX(0.900);transform-origin:100% 0">0</span>
<div class="a" style="left:875px;top:708px;width:20px;height:10px;background:#ff8000"></div>
<div class="a" style="left:688px;top:728px;width:175px;height:18px;background:#c0c0c0"></div>
<span class="t" style="left:527.5px;top:733px;transform:scaleX(0.890)">Decrypt</span>
<span class="t" style="left:853.81px;top:728px;transform:scaleX(0.900);transform-origin:100% 0">0</span>
<div class="a" style="left:875px;top:733px;width:20px;height:10px;background:#808000"></div>
<div class="a" style="left:522px;top:765px;width:369px;height:1px;background:#8a8a8a"></div>
<div class="a" style="left:688px;top:772px;width:175px;height:18px;background:#c0c0c0"></div>
<span class="t" style="left:527.5px;top:776px;transform:scaleX(0.890)">Reminder</span>
<span class="t" style="left:786.25px;top:772px;transform:scaleX(0.900);transform-origin:100% 0">1 800 032 160</span>
<div class="a" style="left:876px;top:777px;width:20px;height:10px;background:#fff"></div>
<div class="a" style="left:816px;top:837px;width:82px;height:25px;background:#f0f0f0;border:1px solid #000;box-shadow:inset 1px 1px 0 #fff,inset -1px -1px 0 #696969,inset -2px -2px 0 #a0a0a0"></div>
<div class="a" style="left:820px;top:841px;width:74px;height:17px;border:1px dotted #000"></div>
<svg style="left:838px;top:840px" width="20" height="20" viewBox="0 0 20 20"><path d="M2.2 10.8l3.2-2.2 2.6 3.6c2.4-4.2 5.2-7.6 8.6-10.2l1.2 1.4c-3.6 3.6-6.2 7.8-8.4 13.4l-2 .2z" fill="#1a9a1a" stroke="#0a5a0a" stroke-width=".9" stroke-linejoin="round"/></svg>
<span class="t" style="left:861.5px;top:843px;transform:scaleX(0.836)">OK</span>
<span class="t" style="left:1139px;top:924px;font-size:20px;line-height:24px;height:24px;color:rgba(120,120,120,.45);transform:scaleX(1.023)">Windows</span>
<span class="t" style="left:1139px;top:949px;font-size:16px;line-height:20px;height:20px;color:rgba(120,120,120,.45)">[설정]으로 이동하여</span>
</div>
</body>
</html>
